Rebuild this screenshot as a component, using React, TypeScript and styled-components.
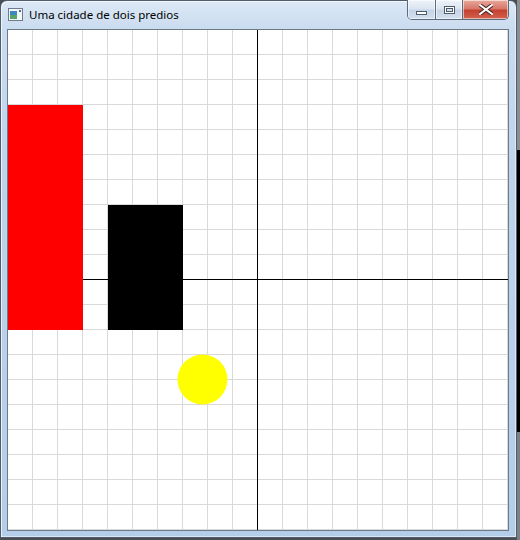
import React from "react";
import styled, { createGlobalStyle } from "styled-components";

const Global = createGlobalStyle`
  html, body { margin: 0; padding: 0; background: #4a4d52; }
  body { width: 520px; height: 540px; overflow: hidden; }
`;

const Page = styled.div`
  display: flex;
  width: 520px;
  height: 540px;
`;

const Window = styled.div`
  width: 515px;
  height: 536px;
  border: 1px solid #4f5d6e;
  border-radius: 7px 7px 0 0;
  background: linear-gradient(180deg, #dce8f5 0px, #c9dbef 30px, #bcd3ec 200px, #b4cde9 536px);
  box-shadow: inset 1px 1px 0 rgba(255,255,255,0.7), inset -1px -1px 0 rgba(255,255,255,0.5);
  display: flex;
  flex-direction: column;
  flex: none;
`;

const TitleBar = styled.div`
  height: 28px;
  display: flex;
  align-items: flex-start;
  padding-left: 7px;
  padding-right: 7px;
`;

const AppIcon = styled.svg`
  margin-top: 7px;
  flex: none;
`;

const Title = styled.div`
  margin-left: 6px;
  margin-top: 6px;
  font-family: "Segoe UI", "Noto Sans", sans-serif;
  font-size: 11.5px;
  line-height: 16px;
  color: #000;
  flex: 1;
  white-space: nowrap;
`;

const Caption = styled.div`
  display: flex;
  margin-top: -1px;
  height: 19px;
  border: 1px solid #5b6a7d;
  border-top: none;
  border-radius: 0 0 5px 5px;
  overflow: hidden;
`;

const CapBtn = styled.div<{ $w: number; $close?: boolean; $low?: boolean }>`
  width: ${(p) => p.$w}px;
  height: 19px;
  display: flex;
  align-items: ${(p) => (p.$low ? "flex-end" : "center")};
  padding-bottom: ${(p) => (p.$low ? "4px" : "0")};
  box-sizing: border-box;
  justify-content: center;
  border-left: 1px solid #5b6a7d;
  background: ${(p) =>
    p.$close
      ? "linear-gradient(180deg, #e9a99c 0%, #d7796a 45%, #c4412f 55%, #d3634f 100%)"
      : "linear-gradient(180deg, #eef3f9 0%, #dbe5f1 45%, #c5d4e6 55%, #d4e0ee 100%)"};
  box-shadow: inset 0 0 0 1px rgba(255,255,255,0.55);
`;

const First = styled(CapBtn)`
  border-left: none;
`;

const Body = styled.div`
  margin: 0 6px;
  width: 500px;
  height: 500px;
  border: 1px solid #6c7a8a;
  background: #fff;
  flex: none;
`;

const Side = styled.div`
  width: 3px;
  display: flex;
  flex-direction: column;
  flex: none;
`;

const SideSeg = styled.div<{ $h: number; $c: string }>`
  height: ${(p) => p.$h}px;
  background: ${(p) => p.$c};
`;

const Canvas = () => {
  const lines = [];
  for (let k = 0; k < 20; k++) {
    const v = 24.5 + 25 * k;
    lines.push(<line key={"v" + k} x1={v} y1={0} x2={v} y2={500} stroke="#d9d9d9" strokeWidth={1} />);
    lines.push(<line key={"h" + k} x1={0} y1={v} x2={500} y2={v} stroke="#d9d9d9" strokeWidth={1} />);
  }
  return (
    <svg width={500} height={500} viewBox="0 0 500 500" style={{ display: "block" }} shapeRendering="crispEdges">
      {lines}
      <line x1={249.5} y1={0} x2={249.5} y2={500} stroke="#000" strokeWidth={1} />
      <line x1={0} y1={249.5} x2={500} y2={249.5} stroke="#000" strokeWidth={1} />
      <rect x={0} y={75} width={75} height={225} fill="#ff0000" />
      <rect x={100} y={175} width={75} height={125} fill="#000000" />
      <circle cx={194.5} cy={349.5} r={25} fill="#ffff00" shapeRendering="auto" />
    </svg>
  );
};

export default function App() {
  return (
    <Page>
      <Global />
      <Window>
        <TitleBar>
          <AppIcon width={15} height={13} viewBox="0 0 15 13">
            <rect x={0.5} y={0.5} width={14} height={12} fill="#f4f6f8" stroke="#6d7c8c" />
            <rect x={2} y={3} width={7} height={8} fill="#3f87c2" />
            <rect x={2} y={7} width={7} height={4} fill="#5aa36a" />
            <rect x={11} y={2} width={2} height={2} fill="#4a6a9a" />
          </AppIcon>
          <Title>Uma cidade de dois predios</Title>
          <Caption>
            <First $w={27} $low>
              <svg width={11} height={4} viewBox="0 0 11 4">
                <rect x={0.5} y={0.5} width={10} height={3} fill="#fff" stroke="#4e5b6b" />
              </svg>
            </First>
            <CapBtn $w={27}>
              <svg width={11} height={8} viewBox="0 0 11 8">
                <rect x={0.5} y={0.5} width={10} height={7} fill="#fff" stroke="#4e5b6b" />
                <rect x={2.5} y={2.5} width={6} height={3} fill="#d6e0ec" stroke="#4e5b6b" />
              </svg>
            </CapBtn>
            <CapBtn $w={46} $close>
              <svg width={14} height={11} viewBox="0 0 14 11">
                <path d="M1 1 L13 10 M13 1 L1 10" stroke="#4a2a26" strokeWidth={4} strokeLinecap="square" />
                <path d="M1 1 L13 10 M13 1 L1 10" stroke="#fff" strokeWidth={2} strokeLinecap="square" />
              </svg>
            </CapBtn>
          </Caption>
        </TitleBar>
        <Body>
          <Canvas />
        </Body>
      </Window>
      <Side>
        <SideSeg $h={150} $c="#8a8e94" />
        <SideSeg $h={282} $c="#000" />
        <SideSeg $h={108} $c="#7b7f86" />
      </Side>
    </Page>
  );
}
